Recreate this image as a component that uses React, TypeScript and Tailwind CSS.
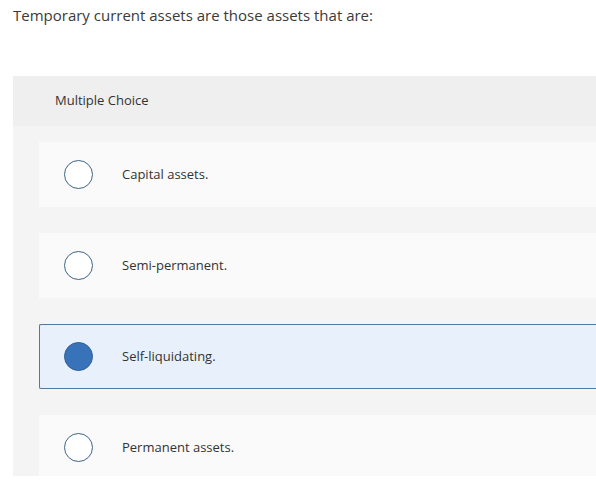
import React from "react";

const options = [
  { label: "Capital assets.", selected: false },
  { label: "Semi-permanent.", selected: false },
  { label: "Self-liquidating.", selected: true },
  { label: "Permanent assets.", selected: false },
];

export default function App() {
  return (
    <div
      className="w-[596px] h-[492px] bg-white overflow-hidden text-[#333]"
      style={{ fontFamily: '"Open Sans", "Liberation Sans", sans-serif' }}
    >
      <div className="pl-[13px] pt-[4px] h-[76px] text-[15px] leading-[22px] text-[#3a3a3a]">
        Temporary current assets are those assets that are:
      </div>
      <div className="ml-[13px] h-[400px] overflow-hidden bg-[#f4f4f4]">
        <div className="h-[50px] bg-[#efefef] flex items-center pl-[42px] text-[13px] text-[#333]">
          Multiple Choice
        </div>
        <div className="pl-[26px] pt-[16px] flex flex-col gap-[26px]">
          {options.map((o) => (
            <div
              key={o.label}
              className={
                o.selected
                  ? "h-[65px] shrink-0 flex items-center pl-[24px] bg-[#e8f1fb] border border-[#4f7aa3] rounded-l-[2px] border-r-0"
                  : "h-[65px] shrink-0 flex items-center pl-[25px] bg-[#fafafa]"
              }
            >
              <span
                className={
                  o.selected
                    ? "w-[29px] h-[29px] rounded-full bg-[#3873b9] border border-[#2f5f94] shrink-0"
                    : "w-[29px] h-[29px] rounded-full bg-white border-[1.5px] border-[#3d6488] shrink-0"
                }
              />
              <span className="ml-[29px] text-[13px] text-[#333]">{o.label}</span>
            </div>
          ))}
        </div>
      </div>
    </div>
  );
}
